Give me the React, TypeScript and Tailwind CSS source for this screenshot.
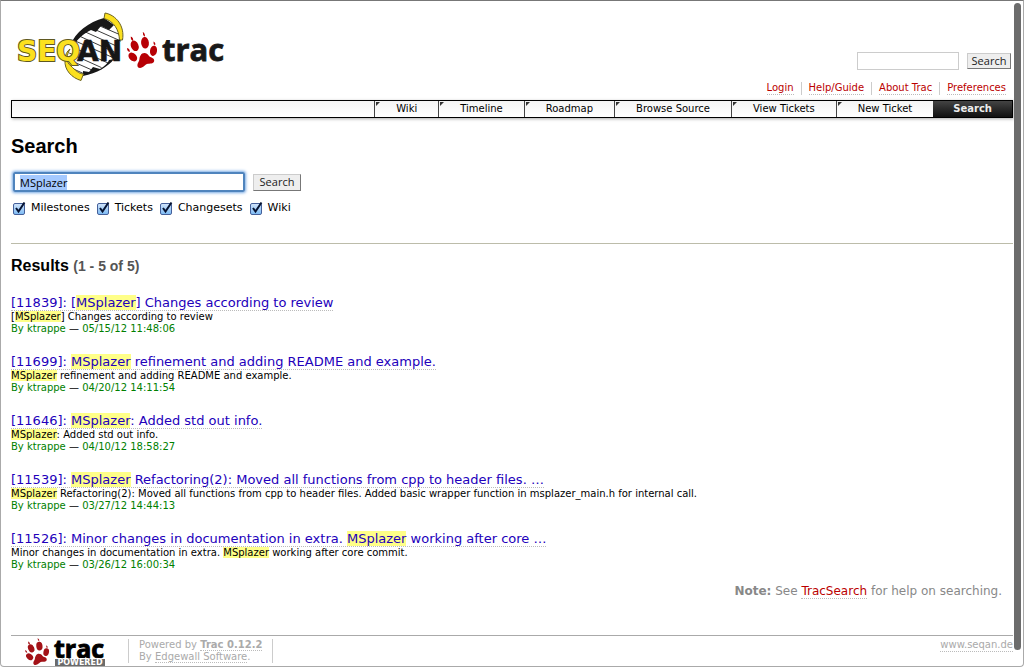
import { Fragment, useEffect, useRef } from "react";

const verdana = "font-['DejaVu_Sans',Verdana,sans-serif]";
const arial = "font-['Liberation_Sans',Arial,sans-serif]";
const lucida = "font-['Open_Sans','Lucida_Grande',sans-serif]";

const metaLinks = ["Login", "Help/Guide", "About Trac", "Preferences"];
const tabs = ["Wiki", "Timeline", "Roadmap", "Browse Source", "View Tickets", "New Ticket"];
const filters = ["Milestones", "Tickets", "Changesets", "Wiki"];

const results = [
  {
    id: "11839",
    title: "[MSplazer] Changes according to review",
    text: "[MSplazer] Changes according to review",
    date: "05/15/12 11:48:06",
  },
  {
    id: "11699",
    title: "MSplazer refinement and adding README and example.",
    text: "MSplazer refinement and adding README and example.",
    date: "04/20/12 14:11:54",
  },
  {
    id: "11646",
    title: "MSplazer: Added std out info.",
    text: "MSplazer: Added std out info.",
    date: "04/10/12 18:58:27",
  },
  {
    id: "11539",
    title: "MSplazer Refactoring(2): Moved all functions from cpp to header files. …",
    text: "MSplazer Refactoring(2): Moved all functions from cpp to header files. Added basic wrapper function in msplazer_main.h for internal call.",
    date: "03/27/12 14:44:13",
  },
  {
    id: "11526",
    title: "Minor changes in documentation in extra. MSplazer working after core …",
    text: "Minor changes in documentation in extra. MSplazer working after core commit.",
    date: "03/26/12 16:00:34",
  },
];

function Marked({ text }: { text: string }) {
  return (
    <>
      {text.split("MSplazer").map((part, i) => (
        <Fragment key={i}>
          {i > 0 && <mark className="bg-[#ffff88] text-inherit">MSplazer</mark>}
          {part}
        </Fragment>
      ))}
    </>
  );
}

function Paw() {
  return (
    <g>
      <path d="M13.500 23.500 C15.500 20 20 20.500 22 24 C23 25.500 27.200 25.500 27.200 28.500 C27.200 31.500 24 31.600 21 31.800 C18 32.200 16.500 36 13 36 C10 36 9.800 32.500 11.500 30 C13 27.500 12 25.500 13.500 23.500 Z" />
      <ellipse cx="5.800" cy="25" rx="3.700" ry="5" transform="rotate(-45 5.800 25)" />
      <ellipse cx="7.700" cy="13.800" rx="3.800" ry="5.500" transform="rotate(-22 7.700 13.800)" />
      <ellipse cx="18" cy="10.800" rx="3.900" ry="5.800" transform="rotate(-6 18 10.800)" />
      <ellipse cx="26.500" cy="18.800" rx="3.500" ry="5.200" transform="rotate(10 26.500 18.800)" />
      <path d="M0 16 Q3 16.500 2.800 20 Q0 19.500 0 16Z M3.800 4.500 Q6.800 5.500 6 9 Q3.500 8 3.800 4.500Z M15.800 0 Q18.500 1.500 17.800 4.800 Q15.500 3.500 15.800 0Z M26.500 9.500 Q29.200 11 28 13.500 Q26 12.500 26.500 9.500Z" />
    </g>
  );
}

function Logo() {
  return (
    <svg width="210" height="72" viewBox="0 0 210 72" role="img" aria-label="SeqAn trac">
      <defs>
        <clipPath id="helix">
          <path d="M87 9 C72 14 60 22 56 30 C52 38 50 48 53 54 C58 61 63 63 68 62 C80 59 92 52 96 47 L104 30 C104 20 97 10 87 9 Z" />
        </clipPath>
      </defs>
      <g clipPath="url(#helix)">
        <rect x="48" y="4" width="60" height="62" fill="#fff" />
        <path
          d="M76 11 L106 24 M70 14 L106 30 M64 18 L106 37 M60 23 L106 44 M56 28 L106 50 M53 34 L100 55 M50 40 L92 59 M50 47 L84 62 M50 54 L74 65"
          stroke="#3c3c3c"
          strokeWidth="1"
        />
      </g>
      <path d="M87 6 C72 10 58 20 53 34 L57 34 C60 27 66 22 74 18 L79 20 L84 14 L92 18 L97 13 Z" fill="#181818" />
      <path d="M97 47 C91 55 80 61 66 64 L66 59 L72 60 L76 55 L83 57 C88 54 91 51 92 48 Z" fill="#181818" />
      <path
        d="M88 1 C99 3 108 14 105.500 28 L102.500 28 C102 18 97 9 87 6.500 Z"
        fill="#fbe01f"
        stroke="#6c6320"
        strokeWidth="1"
      />
      <path
        d="M53 37 C50 42 48 50 54 54 C58 58 62 62 66.500 62 L64 68.500 C55 66 47 58 48 48 C48 43 50 39 53 37 Z"
        fill="#fbe01f"
        stroke="#6c6320"
        strokeWidth="1"
      />
      <text
        x="0"
        y="49"
        fontFamily="DejaVu Sans, sans-serif"
        fontWeight="bold"
        fontSize="28"
        fill="#fbe01f"
        stroke="#5f5820"
        strokeWidth="2"
        paintOrder="stroke"
      >
        SEQ
      </text>
      <text x="60" y="49" fontFamily="DejaVu Sans, sans-serif" fontWeight="bold" fontSize="28" fill="#161616" stroke="#161616" strokeWidth="0.600">
        AN
      </text>
      <g transform="translate(110 20)" fill="#b70005">
        <Paw />
      </g>
      <text x="145" y="49" fontFamily="Open Sans, sans-serif" fontWeight="bold" fontSize="31" fill="#181818" stroke="#181818" strokeWidth="0.800">
        trac
      </text>
    </svg>
  );
}

function PoweredLogo() {
  return (
    <svg className="overflow-visible" width="84" height="28" viewBox="0 0 84 28" role="img" aria-label="Trac Powered">
      <g transform="translate(2 0) scale(0.800 0.750)" fill="#a31217">
        <Paw />
      </g>
      <text x="31" y="20" fontFamily="Open Sans, sans-serif" fontWeight="bold" fontSize="25" fill="#000" stroke="#000" strokeWidth="0.900">
        trac
      </text>
      <rect x="32" y="21" width="50" height="7" fill="#6b6b6b" />
      <text x="57" y="27" textAnchor="middle" fontFamily="DejaVu Sans, sans-serif" fontWeight="bold" fontSize="8" fill="#fff">
        POWERED
      </text>
    </svg>
  );
}

const dotted = "border-b border-dotted border-[#bbb]";
const button =
  "border border-t-[#ccc] border-l-[#ccc] border-r-[#777] border-b-[#777] bg-[#eee] text-center text-[11px] leading-[14px] text-[#222]";

export default function App() {
  const query = useRef<HTMLInputElement>(null);

  useEffect(() => {
    query.current?.focus();
    query.current?.select();
  }, []);

  return (
    <div className={`relative flex h-screen flex-col overflow-hidden rounded-b border border-[#aaa] border-t-[#777] bg-white pr-2.5 pl-2.5 text-[13px] text-black ${verdana}`}>
      <header>
        <div className="flex items-start justify-between">
          <a href="#home" className="mt-[11px] ml-1.5">
            <Logo />
          </a>
          <form className={`mt-[51px] mr-0.5 flex items-center gap-2 ${lucida}`} onSubmit={(e) => e.preventDefault()}>
            <input aria-label="Search site" className="h-[18px] w-[102px] border border-[#ccc] px-1 text-[11px] outline-none" />
            <button className={`h-4 w-11 ${button}`}>Search</button>
          </form>
        </div>
        <nav aria-label="Account" className="-mt-0.5 flex justify-end divide-x divide-[#ccc] text-[10px] leading-3 text-[#bb0000]">
          {metaLinks.map((link) => (
            <div key={link} className="px-[7px]">
              <a href="#meta" className={`block ${dotted}`}>
                {link}
              </a>
            </div>
          ))}
        </nav>
        <nav
          aria-label="Main"
          className="mt-[5px] flex h-[18px] justify-end border border-black bg-linear-to-b from-[#f4f4f4] to-white text-[10px] leading-4 shadow-[1px_1px_3px_#aaa]"
        >
          {tabs.map((tab) => (
            <a key={tab} href="#tab" className="relative border-l border-[#444] px-[21px]">
              <svg className="absolute top-px left-px" width="4" height="4" viewBox="0 0 4 4" aria-hidden="true">
                <path d="M0 0H4L0 4Z" fill="#333" />
              </svg>
              {tab}
            </a>
          ))}
          <a href="#search" className="bg-linear-to-b from-[#444] to-[#111] px-5 font-bold text-[#eee]">
            Search
          </a>
        </nav>
      </header>

      <main>
        <h1 className={`mt-4 text-[20px] leading-6 font-bold ${arial}`}>Search</h1>
        <form onSubmit={(e) => e.preventDefault()}>
          <div className={`mt-3.5 flex items-center gap-2 pl-0.5 ${lucida}`}>
            <input
              ref={query}
              aria-label="Search query"
              defaultValue="MSplazer"
              className="h-5 w-[232px] rounded-xs border-2 border-[#4f84bd] px-[5px] text-[11px] shadow-[0_0_3px_1px_#76a9e4] outline-none selection:bg-[#a4c9ff] selection:text-black"
            />
            <button className={`h-[17px] w-12 ${button}`}>Search</button>
          </div>
          <div className="mt-[9px] flex gap-[7px] pl-0.5 text-[11px] leading-[13px]">
            {filters.map((name) => (
              <label key={name} className="flex items-center gap-1.5">
                <span className="grid size-3">
                  <input
                    type="checkbox"
                    defaultChecked
                    className="peer col-start-1 row-start-1 mt-px size-3 appearance-none rounded-xs border border-[#45609a] bg-linear-to-b from-[#cfe3fa] to-[#7fbcf4]"
                  />
                  <svg
                    className="pointer-events-none invisible relative col-start-1 row-start-1 overflow-visible peer-checked:visible"
                    width="12"
                    height="12"
                    viewBox="0 0 12 12"
                    aria-hidden="true"
                  >
                    <path d="M3 6L5.500 9.500L11.500 0.500" fill="none" stroke="#061332" strokeWidth="2" />
                  </svg>
                </span>
                {name}
              </label>
            ))}
          </div>
        </form>

        <hr className="mt-[29px] border-[#bcbcaa]" />
        <h2 className={`mt-3 text-[16px] leading-5 font-bold ${arial}`}>
          Results <span className="text-[14px] text-[#555]">(1 - 5 of 5)</span>
        </h2>
        <dl className="mt-[19px] flex flex-col gap-[19px]">
          {results.map((r) => (
            <div key={r.id}>
              <dt className="leading-4">
                <a href="#result" className={`${dotted} text-[#2200bb]`}>
                  [{r.id}]: <Marked text={r.title} />
                </a>
              </dt>
              <dd className="text-[10px] leading-3">
                <Marked text={r.text} />
              </dd>
              <dd className="text-[10px] leading-3 text-[#008000]">
                By ktrappe <span className="text-black">—</span> {r.date}
              </dd>
            </div>
          ))}
        </dl>
        <p className="mt-3 pr-[11px] text-right text-[12px] leading-4 text-[#888]">
          <strong>Note:</strong> See{" "}
          <a href="#help" className={`${dotted} text-[#bb0000]`}>
            TracSearch
          </a>{" "}
          for help on searching.
        </p>
      </main>

      <footer className="mt-auto flex h-[31px] items-start justify-between border-t border-[#aaa] text-[10px] leading-3 text-[#aaa]">
        <div className="flex">
          <a href="#trac" className="mt-0.5 ml-3">
            <PoweredLogo />
          </a>
          <p className="mt-[3px] mb-1 ml-[21px] border-x border-[#ccc] px-2.5">
            Powered by{" "}
            <a href="#about" className={`${dotted} font-bold`}>
              Trac 0.12.2
            </a>
            <br />
            By{" "}
            <a href="#edgewall" className={dotted}>
              Edgewall Software
            </a>
            .
          </p>
        </div>
        <a href="#site" className={`mt-[3px] ${dotted}`}>
          www.seqan.de
        </a>
      </footer>

      <div className="absolute top-0.5 right-0.5 bottom-4 w-[7px] rounded-full bg-[#6c6c6c]" />
    </div>
  );
}
